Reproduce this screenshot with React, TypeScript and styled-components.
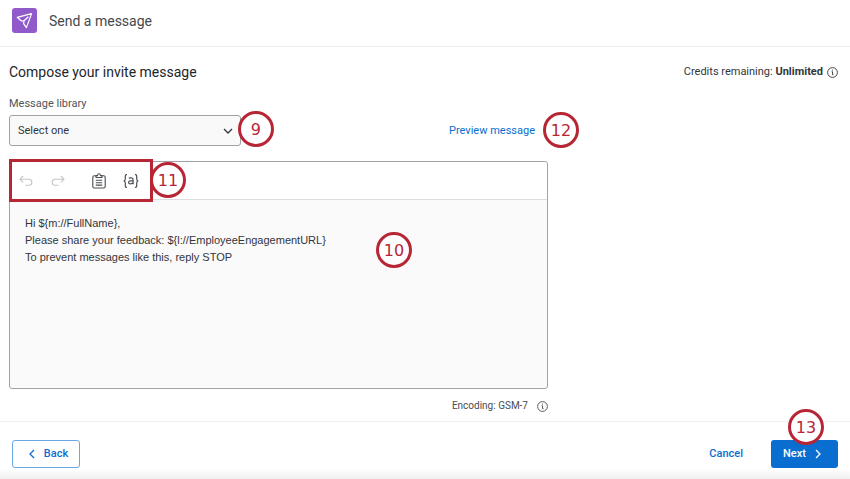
import React from "react";
import styled, { createGlobalStyle, css } from "styled-components";

const GlobalStyle = createGlobalStyle`
  *, *::before, *::after { box-sizing: border-box; }
  body {
    margin: 0;
    background: #fff;
    color: #32363a;
    font-family: Roboto, "Noto Sans", sans-serif;
    font-size: 11px;
    line-height: 16px;
  }
  button, select, textarea { font: inherit; color: inherit; margin: 0; }
  svg { display: block; flex: none; }
`;

const Page = styled.div`
  display: flex;
  flex-direction: column;
  min-height: 100vh;
`;

const Header = styled.header`
  display: flex;
  align-items: center;
  gap: 12px;
  padding: 8px 12px 13px;
  border-bottom: 1px solid #ededed;
`;

const AppMark = styled.span`
  display: grid;
  place-items: center;
  width: 25px;
  height: 25px;
  border-radius: 3px;
  background: #915acb;
  color: #fff;
`;

const PageTitle = styled.h1`
  margin: 0;
  font-size: 14px;
  line-height: 20px;
  font-weight: 400;
  color: #44484b;
`;

const Main = styled.main`
  flex: 1;
  padding: 15px 12px 7px 9px;
`;

const TitleRow = styled.div`
  display: flex;
  align-items: center;
  justify-content: space-between;
`;

const SectionTitle = styled.h2`
  margin: 0;
  font-size: 14px;
  line-height: 20px;
  font-weight: 400;
  color: #222629;
`;

const Credits = styled.p`
  display: flex;
  align-items: center;
  gap: 4px;
  margin: 0;
`;

const Composer = styled.section`
  max-width: 539px;
  margin-top: 14px;
`;

const Label = styled.label`
  display: block;
  margin-bottom: 3px;
  color: #515558;
`;

const LibraryRow = styled.div`
  display: flex;
  align-items: center;
  justify-content: space-between;
  margin-bottom: 15px;
`;

const Anchor = styled.div`
  position: relative;
`;

const SelectField = styled(Anchor)`
  width: 43%;
`;

const Select = styled.select`
  appearance: none;
  display: block;
  width: 100%;
  height: 31px;
  padding: 0 28px 0 8px;
  border: 1px solid #a0a2a4;
  border-radius: 3px;
  background: #f9f9f9;
`;

const SelectArrow = styled.span`
  position: absolute;
  right: 8px;
  top: 12px;
  pointer-events: none;
`;

const PreviewLink = styled.a`
  display: block;
  margin-right: 13px;
  color: #0a6ed1;
  text-decoration: none;
`;

const badgePlaces = {
  select: css`right: -33px; top: -4px;`,
  preview: css`right: -31px; top: -11px;`,
  toolbar: css`right: -33px; top: 0;`,
  message: css`right: 135px; top: 32px;`,
  next: css`right: 14px; top: -31px;`,
};

const Badge = styled.span<{ $place: keyof typeof badgePlaces }>`
  position: absolute;
  z-index: 1;
  display: grid;
  place-items: center;
  width: 36px;
  height: 36px;
  padding-top: 2px;
  border: 3px solid #b72635;
  border-radius: 50%;
  background: #fff;
  color: #b72635;
  font: 16px/20px "DejaVu Sans", sans-serif;
  pointer-events: none;
  ${({ $place }) => badgePlaces[$place]}
`;

const Editor = styled.div`
  border: 1px solid #a0a2a4;
  border-radius: 3px;
  background: #fafafa;
`;

const Toolbar = styled.div`
  display: flex;
  height: 38px;
  border-bottom: 1px solid #dedede;
  border-radius: 3px 3px 0 0;
  background: #fff;
`;

const ToolGroup = styled.div`
  position: relative;
  display: flex;
  align-items: center;
  padding-left: 8px;
  width: 143px;
`;

const Highlight = styled.span`
  position: absolute;
  inset: -3px 0 -3px -1px;
  border: 3px solid #b72635;
  pointer-events: none;
`;

const ToolButton = styled.button<{ $separated?: boolean }>`
  display: grid;
  place-items: center;
  width: 16px;
  height: 24px;
  margin-right: 16px;
  margin-left: ${({ $separated }) => ($separated ? "9px" : "0")};
  padding: 0;
  border: 0;
  background: none;
  color: #4a4e51;
  flex: none;
  &:disabled { color: #c4c5c7; }
`;

const Message = styled.textarea`
  display: block;
  width: 100%;
  height: 188px;
  padding: 15px;
  border: 0;
  outline: 0;
  resize: none;
  background: transparent;
  font-family: "Liberation Sans", Arial, sans-serif;
  font-size: 11px;
  line-height: 17px;
  color: #32363a;
`;

const Encoding = styled.p`
  display: flex;
  align-items: center;
  justify-content: flex-end;
  gap: 9px;
  margin: 9px 0 0;
  font-size: 10px;
  color: #484c4f;
`;

const Footer = styled.footer`
  display: flex;
  align-items: center;
  gap: 27px;
  padding: 18px 12px 11px;
  border-top: 1px solid #f0f0f0;
  background: linear-gradient(to top, #f0f0f0, #fff 10px);
`;

const Button = styled.button<{ $kind: "outline" | "text" | "primary" }>`
  display: flex;
  align-items: center;
  justify-content: center;
  gap: 8px;
  height: 28px;
  padding: 0 12px;
  border: 1px solid transparent;
  border-radius: 3px;
  background: none;
  color: #0a6ed1;
  font-weight: 500;
  ${({ $kind }) => $kind === "outline" && css`
    width: 68px;
    padding: 0 6px 0 10px;
    border-color: #6ba6e4;
    background: #fff;
  `}
  ${({ $kind }) => $kind === "text" && css`
    margin-left: auto;
    padding: 0;
  `}
  ${({ $kind }) => $kind === "primary" && css`
    width: 67px;
    padding: 0 10px 0 6px;
    background: #0a6ed1;
    color: #fff;
  `}
`;

const InfoIcon = () => (
  <svg width="11" height="11" viewBox="0 0 11 11" fill="none" stroke="currentColor" role="img" aria-label="More information">
    <circle cx="5.5" cy="5.5" r="4.9" strokeWidth="0.9" />
    <path d="M4.6 4.7h.9v3h1" strokeWidth="0.9" />
    <circle cx="5.4" cy="3.1" r=".55" fill="currentColor" stroke="none" />
  </svg>
);

const SendIcon = () => (
  <svg width="17" height="17" viewBox="0 0 17 17" fill="none" stroke="currentColor" strokeWidth="1.2" strokeLinejoin="round" aria-hidden="true">
    <path d="M15.6 1.6 1.2 5.3 5.5 9 8 8.8 7.6 11.6 10.4 15.6Z" />
    <path d="M8 8.8 12.4 4.8" />
  </svg>
);

const Chevron = ({ direction }: { direction: "down" | "left" | "right" }) => {
  const points = { down: "1,2 5,6 9,2", left: "6,1 2,5 6,9", right: "2,1 6,5 2,9" };
  const flat = direction === "down";
  return (
    <svg width={flat ? 10 : 8} height={flat ? 8 : 10} fill="none" stroke="currentColor" strokeWidth="1.3" aria-hidden="true">
      <polyline points={points[direction]} />
    </svg>
  );
};

const UndoIcon = () => (
  <svg width="14" height="14" viewBox="0 0 14 14" fill="none" stroke="currentColor" strokeWidth="1.1" aria-hidden="true">
    <path d="M4.2 2 1 5.2 4.2 8.4M1 5.2H10a2.8 3 0 0 1 0 6.1H6.5" />
  </svg>
);

const RedoIcon = () => (
  <svg width="14" height="14" viewBox="0 0 14 14" fill="none" stroke="currentColor" strokeWidth="1.1" aria-hidden="true">
    <path d="M9.8 2 13 5.2 9.8 8.4M13 5.2H4a2.8 3 0 0 0 0 6.1h3.5" />
  </svg>
);

const ClipboardIcon = () => (
  <svg width="14" height="16" viewBox="0 0 14 16" fill="none" stroke="currentColor" strokeWidth="1.1" strokeLinejoin="round" aria-hidden="true">
    <path d="M4 2.8H2.3Q.8 2.8.8 4.3v9.2q0 1.5 1.5 1.5h9.4q1.5 0 1.5-1.5V4.3q0-1.5-1.5-1.5H10" />
    <path d="M4 4.5V2.6h1.5Q5.7.8 7 .8t1.5 1.8H10v1.9ZM3.8 7.3h6.4M3.8 9.7h6.4M3.8 12.1h6.4" />
  </svg>
);

const PipedTextIcon = () => (
  <svg width="16" height="14" viewBox="0 0 16 14" fill="none" stroke="currentColor" strokeWidth="1.2" aria-hidden="true">
    <path d="M4 .7H3.5Q2.3.7 2.3 2v3Q2.3 6.7.7 7q1.6.3 1.6 2v3q0 1.3 1.2 1.3H4M12 .7h.5q1.2 0 1.2 1.3v3q0 1.7 1.6 2-1.6.3-1.6 2v3q0 1.3-1.2 1.3H12" />
    <path d="M5.8 4.2q4.3-1.2 4.3 1.5v4.5M10.1 6.8H7.6q-2 0-2 1.6 0 1.5 1.7 1.5 2 0 2.8-1.4" />
  </svg>
);

const draft = [
  "Hi ${m://FullName},",
  "Please share your feedback: ${l://EmployeeEngagementURL}",
  "To prevent messages like this, reply STOP",
].join("\n");

export default function App() {
  return (
    <Page>
      <GlobalStyle />
      <Header>
        <AppMark><SendIcon /></AppMark>
        <PageTitle>Send a message</PageTitle>
      </Header>
      <Main>
        <TitleRow>
          <SectionTitle>Compose your invite message</SectionTitle>
          <Credits>
            <span>Credits remaining: <b>Unlimited</b></span>
            <InfoIcon />
          </Credits>
        </TitleRow>
        <Composer>
          <Label htmlFor="library">Message library</Label>
          <LibraryRow>
            <SelectField>
              <Select id="library" defaultValue="">
                <option value="">Select one</option>
              </Select>
              <SelectArrow><Chevron direction="down" /></SelectArrow>
              <Badge $place="select">9</Badge>
            </SelectField>
            <Anchor>
              <PreviewLink href="#preview">Preview message</PreviewLink>
              <Badge $place="preview">12</Badge>
            </Anchor>
          </LibraryRow>
          <Editor>
            <Toolbar>
              <ToolGroup>
                <ToolButton type="button" aria-label="Undo" disabled><UndoIcon /></ToolButton>
                <ToolButton type="button" aria-label="Redo" disabled><RedoIcon /></ToolButton>
                <ToolButton type="button" aria-label="Paste" $separated><ClipboardIcon /></ToolButton>
                <ToolButton type="button" aria-label="Insert piped text"><PipedTextIcon /></ToolButton>
                <Highlight />
                <Badge $place="toolbar">11</Badge>
              </ToolGroup>
            </Toolbar>
            <Anchor>
              <Message aria-label="Message" defaultValue={draft} spellCheck={false} />
              <Badge $place="message">10</Badge>
            </Anchor>
          </Editor>
          <Encoding>Encoding: GSM-7 <InfoIcon /></Encoding>
        </Composer>
      </Main>
      <Footer>
        <Button type="button" $kind="outline"><Chevron direction="left" />Back</Button>
        <Button type="button" $kind="text">Cancel</Button>
        <Anchor>
          <Button type="button" $kind="primary">Next<Chevron direction="right" /></Button>
          <Badge $place="next">13</Badge>
        </Anchor>
      </Footer>
    </Page>
  );
}
